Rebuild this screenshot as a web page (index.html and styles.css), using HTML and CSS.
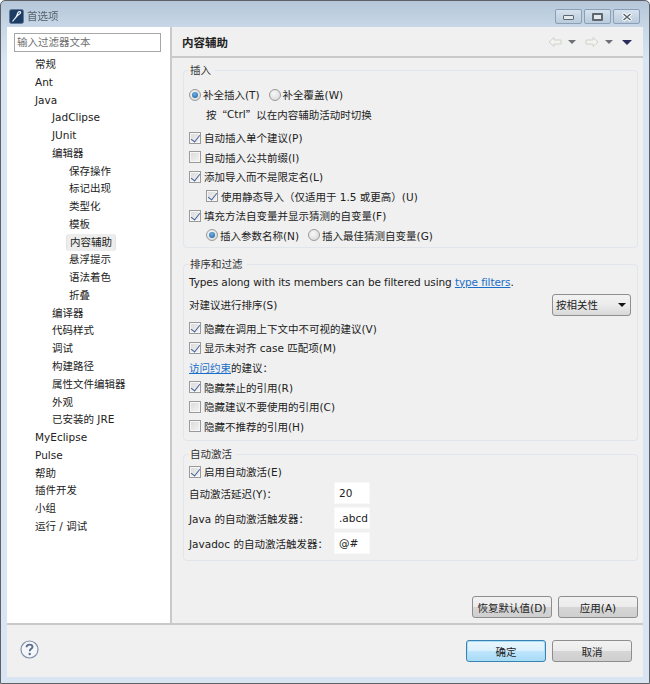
FILE: index.html
```html
<!DOCTYPE html>
<html lang="zh-CN">
<head>
<meta charset="utf-8">
<title>首选项</title>
<link rel="stylesheet" href="styles.css">
</head>
<body>
<div class="window">
  <header class="titlebar">
    <div class="title-left">
      <svg class="app-icon" width="15" height="15" viewBox="0 0 15 15"><rect x="0.5" y="0.5" width="14" height="14" rx="2" fill="#1c3c64" stroke="#5f7a99"/><path d="M3.5 12.5 L7 8 C8.5 6 8 5 9 3.5 C9.8 2.4 11.6 2.3 11.6 3.4 C11.6 4.6 9.6 5.4 8 7 L5.6 9.8" fill="none" stroke="#f2f6fa" stroke-width="1.2"/></svg>
      <span class="title-text">首选项</span>
    </div>
    <div class="win-buttons">
      <button class="win-btn"><span class="glyph-min"></span></button>
      <button class="win-btn"><span class="glyph-max"></span></button>
      <button class="win-btn win-close"><svg width="12" height="10" viewBox="0 0 12 10"><path d="M2 1.5 L10 8.5 M10 1.5 L2 8.5" stroke="#fff" stroke-width="3.6"/><path d="M2.5 2 L9.5 8 M9.5 2 L2.5 8" stroke="#5e6770" stroke-width="1.6"/></svg></button>
    </div>
  </header>

  <div class="client">
    <div class="main">
      <nav class="nav">
        <div class="filter">输入过滤器文本</div>
        <ul class="tree">
          <li class="l0">常规</li>
          <li class="l0">Ant</li>
          <li class="l0">Java</li>
          <li class="l1">JadClipse</li>
          <li class="l1">JUnit</li>
          <li class="l1">编辑器</li>
          <li class="l2">保存操作</li>
          <li class="l2">标记出现</li>
          <li class="l2">类型化</li>
          <li class="l2">模板</li>
          <li class="l2"><span class="selected">内容辅助</span></li>
          <li class="l2">悬浮提示</li>
          <li class="l2">语法着色</li>
          <li class="l2">折叠</li>
          <li class="l1">编译器</li>
          <li class="l1">代码样式</li>
          <li class="l1">调试</li>
          <li class="l1">构建路径</li>
          <li class="l1">属性文件编辑器</li>
          <li class="l1">外观</li>
          <li class="l1">已安装的 JRE</li>
          <li class="l0">MyEclipse</li>
          <li class="l0">Pulse</li>
          <li class="l0">帮助</li>
          <li class="l0">插件开发</li>
          <li class="l0">小组</li>
          <li class="l0">运行 / 调试</li>
        </ul>
      </nav>

      <section class="pane">
        <div class="pane-head">
          <h1 class="pane-title">内容辅助</h1>
          <div class="nav-tools">
            <svg class="arrow" width="14" height="12" viewBox="0 0 14 12"><path d="M1 6 L6 1.5 V4 H13 V8 H6 V10.5 Z" fill="#f3f3f0" stroke="#cfd2cc"/></svg>
            <span class="tri tri-grey"></span>
            <svg class="arrow arrow-b" width="14" height="12" viewBox="0 0 14 12"><path d="M13 6 L8 1.5 V4 H1 V8 H8 V10.5 Z" fill="#f3f3f0" stroke="#cfd2cc"/></svg>
            <span class="tri tri-grey"></span>
            <span class="tri tri-dark"></span>
          </div>
        </div>

        <div class="pane-body">
          <fieldset class="group group-insert">
            <legend>插入</legend>
            <div class="row inline">
              <label class="item"><input type="radio" name="a" checked>补全插入(T)</label>
              <label class="item"><input type="radio" name="a">补全覆盖(W)</label>
            </div>
            <div class="row hint">按 <span class="cjk">“</span>Ctrl<span class="cjk">”</span> 以在内容辅助活动时切换</div>
            <div class="row gap-top"><label class="item"><input type="checkbox" checked>自动插入单个建议(P)</label></div>
            <div class="row"><label class="item"><input type="checkbox">自动插入公共前缀(I)</label></div>
            <div class="row"><label class="item"><input type="checkbox" checked>添加导入而不是限定名(L)</label></div>
            <div class="row sub"><label class="item"><input type="checkbox" checked>使用静态导入（仅适用于 1.5 或更高）(U)</label></div>
            <div class="row"><label class="item"><input type="checkbox" checked>填充方法自变量并显示猜测的自变量(F)</label></div>
            <div class="row sub inline">
              <label class="item"><input type="radio" name="b" checked>插入参数名称(N)</label>
              <label class="item"><input type="radio" name="b">插入最佳猜测自变量(G)</label>
            </div>
          </fieldset>

          <fieldset class="group group-sort">
            <legend>排序和过滤</legend>
            <div class="row tight">Types along with its members can be filtered using&nbsp;<a class="link" href="#">type filters</a>.</div>
            <div class="row sort-row">
              <span>对建议进行排序(S)</span>
              <div class="select"><span>按相关性</span><span class="tri tri-black"></span></div>
            </div>
            <div class="row"><label class="item"><input type="checkbox" checked>隐藏在调用上下文中不可视的建议(V)</label></div>
            <div class="row"><label class="item"><input type="checkbox" checked>显示未对齐 case 匹配项(M)</label></div>
            <div class="row"><a class="link" href="#">访问约束</a>的建议：</div>
            <div class="row"><label class="item"><input type="checkbox" checked>隐藏禁止的引用(R)</label></div>
            <div class="row"><label class="item"><input type="checkbox">隐藏建议不要使用的引用(C)</label></div>
            <div class="row"><label class="item"><input type="checkbox">隐藏不推荐的引用(H)</label></div>
          </fieldset>

          <fieldset class="group group-auto">
            <legend>自动激活</legend>
            <div class="row"><label class="item"><input type="checkbox" checked>启用自动激活(E)</label></div>
            <div class="field-row"><span class="field-label">自动激活延迟(Y)：</span><div class="field">20</div></div>
            <div class="field-row"><span class="field-label">Java 的自动激活触发器：</span><div class="field">.abcd</div></div>
            <div class="field-row"><span class="field-label">Javadoc 的自动激活触发器：</span><div class="field">@#</div></div>
          </fieldset>

          <div class="pane-actions">
            <button class="btn">恢复默认值(D)</button>
            <button class="btn">应用(A)</button>
          </div>
        </div>
      </section>
    </div>

    <footer class="footer">
      <svg class="help" width="19" height="19" viewBox="0 0 19 19"><circle cx="9.5" cy="9.5" r="8.5" fill="#f4f6f9" stroke="#7f8fa9" stroke-width="1.2"/><path d="M6.5 7.3 C6.6 5.3 8 4.6 9.5 4.6 C11.2 4.6 12.5 5.5 12.5 7 C12.5 8.8 9.7 9 9.7 11.2" fill="none" stroke="#5b6b8c" stroke-width="1.9"/><circle cx="9.7" cy="14" r="1.2" fill="#5b6b8c"/></svg>
      <div class="footer-actions">
        <button class="btn btn-default">确定</button>
        <button class="btn">取消</button>
      </div>
    </footer>
  </div>
</div>
</body>
</html>
```

FILE: styles.css
```css
* { box-sizing: border-box; }
html, body { margin: 0; padding: 0; }
body {
  width: 650px;
  height: 684px;
  overflow: hidden;
  font-family: "DejaVu Sans", "Noto Sans CJK SC", sans-serif;
  font-size: 10.5px;
  color: #222;
}
.window {
  width: 650px;
  height: 684px;
  display: flex;
  flex-direction: column;
  border: 1px solid #5e6165;
  border-radius: 5px 5px 0 0;
  background: linear-gradient(180deg, #b4c6d8 0, #c8d8e8 27px, #d9e5f2 60px, #d9e5f2 100%);
  filter: blur(0.3px);
}
.cjk { font-family: "Noto Sans CJK SC", sans-serif; }
.titlebar {
  height: 26px;
  flex: none;
  display: flex;
  justify-content: space-between;
  padding: 8px 2px 0 8px;
}
.title-left { display: flex; align-items: flex-start; gap: 3px; }
.app-icon { display: block; }
.title-text { font-size: 10.5px; line-height: 15px; color: #555f69; }
.win-buttons { display: flex; gap: 2px; margin-right: 7px; }
.win-btn {
  width: 27px;
  height: 15px;
  padding: 0;
  display: flex;
  align-items: center;
  justify-content: center;
  border: 1px solid #8ba0b5;
  border-radius: 2px;
  background: linear-gradient(180deg, #d6e2ee, #b9cbdc);
}
.glyph-min { width: 11px; height: 5px; border: 1px solid #5e6770; background: #e4e9ee; border-radius: 1px; margin-top: 2px; }
.glyph-max { width: 11px; height: 8px; border: 2px solid #5e6770; background: #e4e9ee; border-radius: 1px; }

.client {
  flex: 1;
  margin: 0 6px 6px;
  background: #f0f0f0;
  display: flex;
  flex-direction: column;
}
.main {
  height: 598px;
  display: flex;
  border-bottom: 2px solid #c9c9c9;
}
.nav {
  width: 163px;
  flex: none;
  background: #fff;
  padding: 6px 7px 0;
}
.filter {
  width: 147px;
  height: 19px;
  border: 1px solid #a7a7a7;
  background: #fff;
  color: #6e6e6e;
  font-size: 10.5px;
  line-height: 17px;
  padding-left: 2px;
}
.tree { list-style: none; margin: 4px 0 0; padding: 0; }
.tree li { height: 17.77px; line-height: 17.77px; white-space: nowrap; }
.l0 { padding-left: 21px; }
.l1 { padding-left: 38px; }
.l2 { padding-left: 55px; }
.selected {
  display: inline-block;
  height: 17px;
  line-height: 16px;
  margin-left: -3px;
  padding: 0 3px;
  background: #ededed;
  border: 1px solid #e2e2e2;
  border-width: 0 1px;
  border-radius: 3px;
}
.pane {
  flex: 1;
  min-width: 0;
  display: flex;
  flex-direction: column;
  border-left: 2px solid #c9c9c9;
}
.pane-head {
  height: 31px;
  flex: none;
  display: flex;
  align-items: center;
  justify-content: space-between;
  padding: 1px 10px 0;
  border-bottom: 2px solid #c9c9c9;
}
.pane-title { margin: 0; font-size: 11.5px; font-weight: 700; color: #222; }
.nav-tools { display: flex; align-items: center; margin-right: 1px; }
.arrow { display: block; }
.arrow-b { margin-left: 9px; }
.tri { display: block; width: 0; height: 0; border-style: solid; border-color: transparent; border-width: 4px 4px 0; }
.tri-grey { border-top-color: #6d7074; margin-left: 6px; }
.tri-dark { border-width: 5px 5px 0; border-top-color: #2c2a5c; margin-left: 9px; }
.tri-black { border-width: 4px 4px 0; border-top-color: #111; }

.pane-body {
  flex: 1;
  display: flex;
  flex-direction: column;
  padding: 5px 5px 5px 11px;
}
.group {
  margin: 0;
  min-width: 0;
  padding: 0 5px;
  border: 1px solid #e0e6ec;
  border-radius: 4px;
}
.group legend { padding: 0 4px 0 1px; line-height: 14px; color: #333; }
.group-insert { height: 185px; padding-top: 8px; }
.group-sort { height: 184px; margin-top: 9px; padding-top: 1px; }
.group-auto { height: 114px; margin-top: 6px; padding-top: 1px; }
.row { height: 19.3px; display: flex; align-items: center; white-space: nowrap; }
.group-insert .row { height: 19.5px; }
.group-sort .row { height: 19.6px; }
.inline { gap: 9px; }
.hint { padding-left: 17px; }
.gap-top { margin-top: 4px; }
.sub { padding-left: 17px; }
.tight { letter-spacing: -0.1px; }
.item { display: inline-flex; align-items: center; gap: 2px; }
.item input { margin: 0; flex: none; appearance: none; width: 12px; height: 12px; position: relative; }
.item input[type="checkbox"] {
  margin-right: 1px;
  border: 1px solid #9a9a9a;
  background: linear-gradient(135deg, #d9d9d9, #f4f4f4);
  box-shadow: inset 0 0 0 1px #f6f6f6;
}
.item input[type="checkbox"]:checked::after {
  content: "";
  position: absolute;
  left: 3px;
  top: 0;
  width: 4px;
  height: 8px;
  border: solid #3f5f96;
  border-width: 0 1.6px 1.6px 0;
  transform: rotate(38deg);
}
.item input[type="radio"] {
  border: 1px solid #9a9a9a;
  border-radius: 50%;
  background: radial-gradient(circle at 40% 35%, #f8f8f8, #d4d4d4);
}
.item input[type="radio"]:checked::after {
  content: "";
  position: absolute;
  left: 2px;
  top: 2px;
  width: 6px;
  height: 6px;
  border-radius: 50%;
  background: radial-gradient(circle at 45% 35%, #6db2e8, #1c5a96);
}
.link { color: #1a6fc9; text-decoration: underline; }
.group-sort .sort-row { justify-content: space-between; height: 26px; margin: 0 0 1px; }
.select {
  width: 79px;
  height: 22px;
  margin-right: 1px;
  display: flex;
  align-items: center;
  justify-content: space-between;
  padding: 0 4px 0 3px;
  border: 1px solid #8f8f8f;
  border-radius: 3px;
  background: linear-gradient(180deg, #f2f2f2 0, #ebebeb 50%, #d8d8d8 100%);
}
.field-row { display: flex; align-items: center; height: 20px; margin-top: 5px; }
.row + .field-row { margin-top: 2px; }
.field-label { width: 146px; white-space: nowrap; }
.field {
  width: 34px;
  height: 20px;
  background: #fff;
  line-height: 20px;
  padding-left: 4px;
  overflow: hidden;
  white-space: nowrap;
  box-shadow: 0 0 0 1px #f8f8f8;
}
.pane-actions {
  margin-top: auto;
  display: flex;
  justify-content: flex-end;
  gap: 6px;
}
.btn {
  width: 80px;
  height: 22px;
  padding: 0;
  font: inherit;
  color: #222;
  border: 1px solid #8e8e8e;
  border-radius: 3px;
  background: linear-gradient(180deg, #f2f2f2 0, #ebebeb 50%, #d6d6d6 52%, #cfcfcf 100%);
}
.btn-default {
  border: 1px solid #3c7fb1;
  box-shadow: inset 0 0 0 1px #a6e0f5;
  background: linear-gradient(180deg, #eaf6fd 0, #d9f0fc 50%, #bee6fd 52%, #a7d9f5 100%);
}
.footer {
  flex: 1;
  display: flex;
  align-items: flex-start;
  justify-content: space-between;
  padding: 13px 11px 0 13px;
}
.help { display: block; margin-top: 2px; }
.footer-actions { display: flex; gap: 6px; margin-top: 2px; }
```
